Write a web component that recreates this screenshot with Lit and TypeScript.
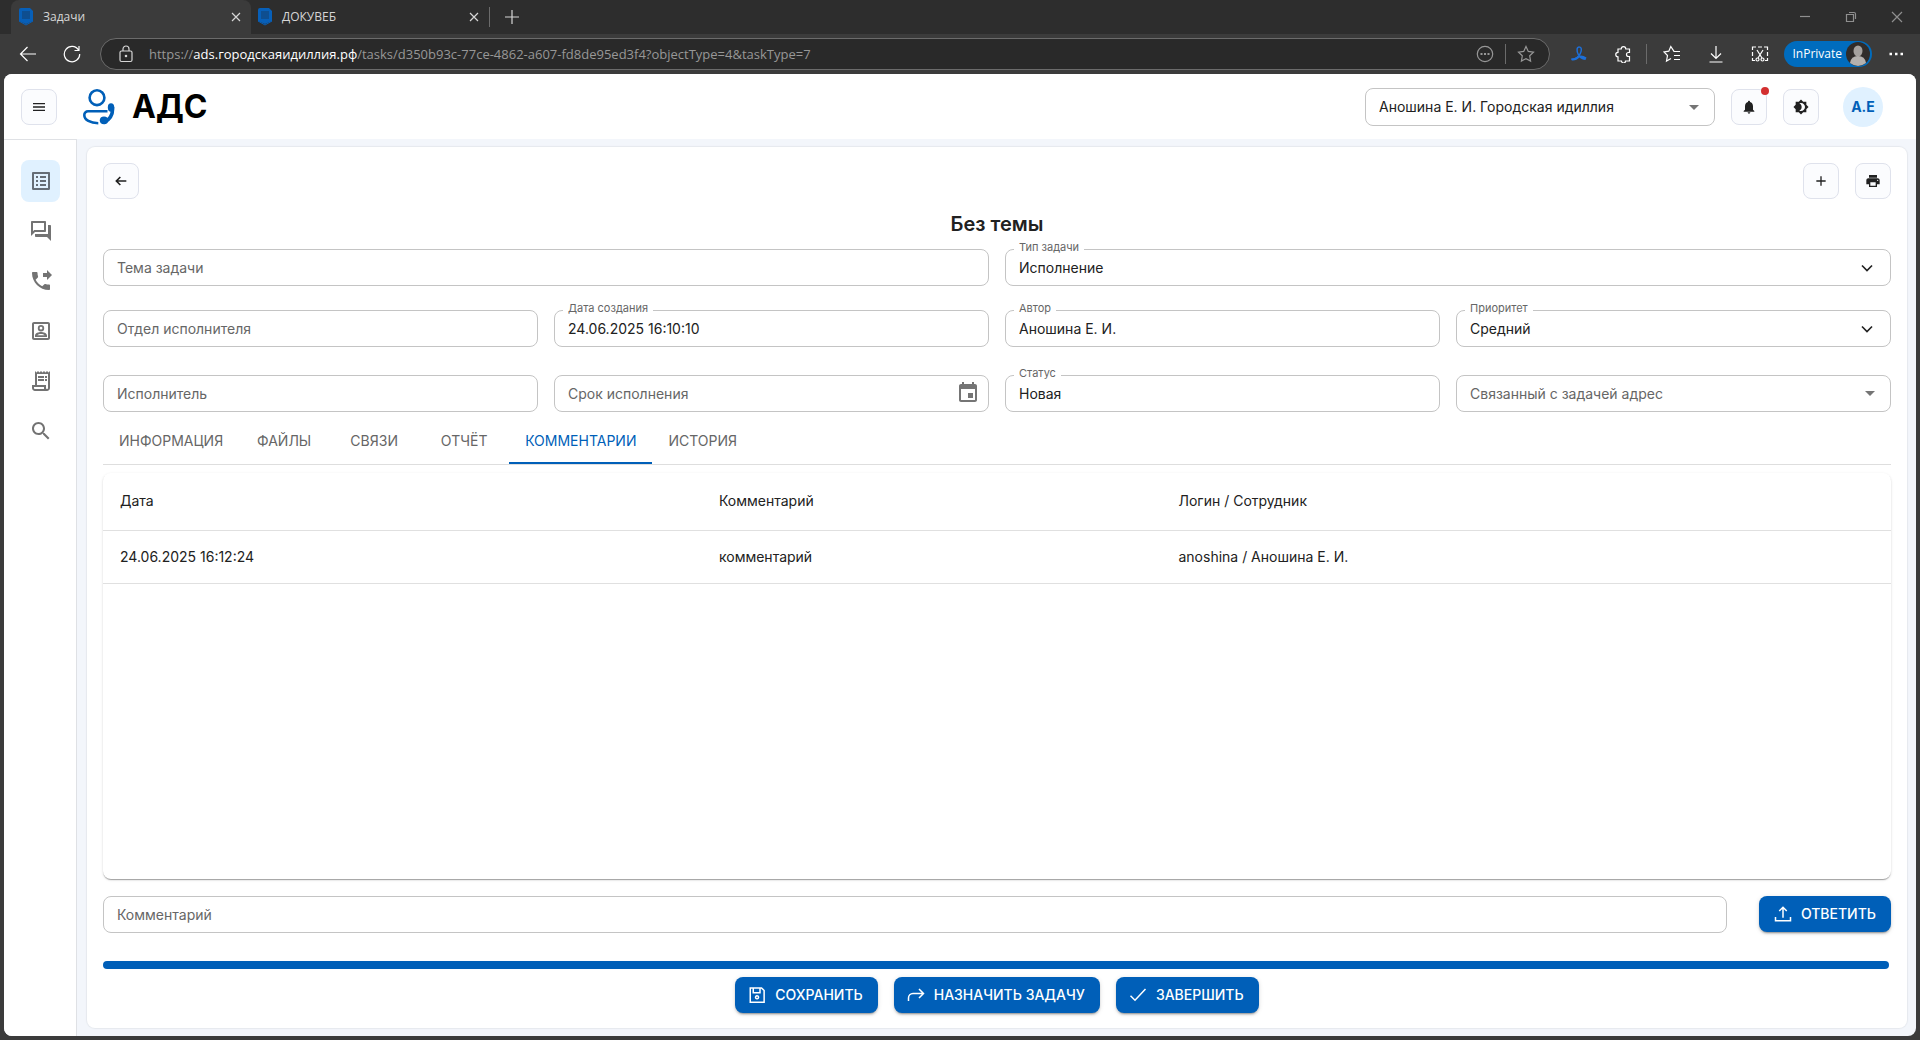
import { LitElement, html, css, svg, nothing } from "lit";
import { customElement } from "lit/decorators.js";

const paths: Record<string, string> = {
  menu: "M3 18h18v-2H3v2zm0-5h18v-2H3v2zm0-7v2h18V6H3z",
  list: "M19 5v14H5V5h14m1.1-2H3.9c-.5 0-.9.4-.9.9v16.2c0 .4.4.9.9.9h16.2c.4 0 .9-.5.9-.9V3.9c0-.5-.5-.9-.9-.9zM11 7h6v2h-6V7zm0 4h6v2h-6v-2zm0 4h6v2h-6zM7 7h2v2H7zm0 4h2v2H7zm0 4h2v2H7z",
  chat: "M15 4v7H5.17L4 12.17V4h11m1-2H3c-.55 0-1 .45-1 1v14l4-4h10c.55 0 1-.45 1-1V3c0-.55-.45-1-1-1zm5 4h-2v9H6v2c0 .55.45 1 1 1h11l4 4V7c0-.55-.45-1-1-1z",
  phone: "M18 11l5-5-5-5v3h-4v4h4v3zm2 4.5c-1.25 0-2.45-.2-3.57-.57-.35-.11-.74-.03-1.02.24l-2.2 2.2c-2.83-1.44-5.15-3.75-6.59-6.59l2.2-2.21c.28-.26.36-.65.25-1C8.7 6.45 8.5 5.25 8.5 4c0-.55-.45-1-1-1H4c-.55 0-1 .45-1 1 0 9.39 7.61 17 17 17 .55 0 1-.45 1-1v-3.5c0-.55-.45-1-1-1z",
  account: "M19 3H5c-1.1 0-2 .9-2 2v14c0 1.1.9 2 2 2h14c1.1 0 2-.9 2-2V5c0-1.1-.9-2-2-2zm0 16H5V5h14v14zM12 6a3.2 3.2 0 1 0 0 6.4A3.2 3.2 0 0 0 12 6zm0 4.6a1.4 1.4 0 1 1 0-2.8 1.4 1.4 0 0 1 0 2.8zM12 13c-2.3 0-6 1.1-6 3.6V18h12v-1.400c0-2.500-3.700-3.600-6-3.600zm-3.700 3.300c.8-.9 2.300-1.400 3.700-1.400s2.900.5 3.700 1.400z",
  receipt: "M19.5 3.5 18 2l-1.500 1.500L15 2l-1.500 1.500L12 2l-1.500 1.500L9 2 7.500 3.500 6 2v14H3v3c0 1.660 1.340 3 3 3h12c1.660 0 3-1.340 3-3V2l-1.500 1.500zM15 20H6c-.55 0-1-.45-1-1v-1h10v2zm4-1c0 .55-.45 1-1 1s-1-.45-1-1v-3H8V5h11v14zM9 7h6v2H9zM16 7h2v2h-2zM9 10h6v2H9zM16 10h2v2h-2z",
  search: "M15.5 14h-.79l-.28-.27C15.41 12.59 16 11.11 16 9.5 16 5.91 13.09 3 9.5 3S3 5.91 3 9.5 5.91 16 9.5 16c1.61 0 3.09-.59 4.23-1.57l.27.28v.79l5 4.99L20.49 19l-4.99-5zm-6 0C7.01 14 5 11.99 5 9.5S7.01 5 9.5 5 14 7.01 14 9.5 11.99 14 9.5 14z",
  event: "M17 12h-5v5h5v-5zM16 1v2H8V1H6v2H5c-1.11 0-1.99.9-1.99 2L3 19c0 1.1.89 2 2 2h14c1.1 0 2-.9 2-2V5c0-1.1-.9-2-2-2h-1V1h-2zm3 18H5V8h14v11z",
  print: "M19 8H5c-1.66 0-3 1.34-3 3v6h4v4h12v-4h4v-6c0-1.66-1.34-3-3-3zm-3 11H8v-5h8v5zm3-7c-.55 0-1-.45-1-1s.45-1 1-1 1 .45 1 1-.45 1-1 1zm-1-9H6v4h12V3z",
  bell: "M12 22c1.1 0 2-.9 2-2h-4c0 1.1.89 2 2 2zm6-6v-5c0-3.07-1.64-5.64-4.5-6.32V4c0-.83-.67-1.5-1.5-1.5s-1.5.67-1.5 1.5v.68C7.63 5.36 6 7.92 6 11v5l-2 2v1h16v-1l-2-2z",
  theme: "M20 8.69V4h-4.690L12 .69 8.690 4H4v4.690L.69 12 4 15.310V20h4.690L12 23.310 15.310 20H20v-4.690L23.310 12 20 8.690zM12 18c-.89 0-1.740-.2-2.500-.55C11.560 16.500 13 14.420 13 12s-1.440-4.500-3.500-5.450C10.260 6.200 11.110 6 12 6c3.310 0 6 2.690 6 6s-2.690 6-6 6z",
  drop: "M7 10l5 5 5-5z",
};

const strokes: Record<string, string> = {
  back: "M20 12H5M11 6l-6 6 6 6",
  plus: "M12 5v14M5 12h14",
  chevron: "M6 9l6 6 6-6",
  save: "M3 2.500h15l3.500 3.500v15.500H3zM7 3v6h9V3M12 13a2 2 0 1 0 .1 0",
  forward: "M2 20v-4a6 6 0 0 1 6-6h14M16 4l6 6-6 6",
  check: "M2 13l6 6L22 4",
  upload: "M12 17V3M7 8l5-5 5 5M2 16v5h20v-5",
};

const fill = (name: string, size = 24) => html`<svg class="ic" width=${size} height=${size} viewBox="0 0 24 24" fill="currentColor" aria-hidden="true"><path d=${paths[name]}></path></svg>`;
const line = (name: string, size = 18, w = 2) => html`<svg class="ic" width=${size} height=${size} viewBox="0 0 24 24" fill="none" stroke="currentColor" stroke-width=${w} aria-hidden="true"><path d=${strokes[name]}></path></svg>`;
const chrome = (body: unknown, size = 18) => html`<svg class="ic" width=${size} height=${size} viewBox="0 0 18 18" fill="none" stroke="currentColor" stroke-width="1.2" aria-hidden="true">${body}</svg>`;

const base = css`
  *, :host { box-sizing: border-box; }
  button, input, select { font: inherit; color: inherit; margin: 0; }
  button { display: inline-flex; align-items: center; justify-content: center; border: 0; background: none; padding: 0; cursor: pointer; }
  .ic { display: block; flex: none; }
`;

@customElement("browser-bar")
class BrowserBar extends LitElement {
  static styles = [base, css`
    :host { display: block; color: #d6d6d6; font: 12px/16px "Open Sans", "Noto Sans", sans-serif; background: #3b3b3b; }
    .strip { display: flex; height: 34px; background: #2d2d2d; padding-left: 11px; align-items: center; }
    .tab { display: flex; align-items: center; gap: 9px; width: 240px; height: 34px; padding: 0 6px 0 7px; border-radius: 8px 8px 0 0; }
    .tab.on { background: #3b3b3b; }
    .tab a { flex: 1; color: inherit; text-decoration: none; }
    .tab.next { width: 238px; padding: 0 6px; }
    .rule { width: 1px; height: 20px; background: #6b6b6b; }
    .add { margin-left: 13px; }
    .controls { display: flex; margin-left: auto; color: #8f8f8f; }
    .controls button { width: 46px; height: 34px; }
    .bar { display: flex; align-items: center; height: 40px; padding: 0 15px 0 19px; }
    .nav { display: flex; gap: 26px; width: 81px; color: #fff; }
    .address { flex: 1; display: flex; align-items: center; gap: 14px; height: 32px; padding: 0 14px 0 16px; border: 1px solid #6b6b6b; border-radius: 16px; background: #292929; font-size: 13px; min-width: 0; }
    .url { flex: 1; color: #979797; white-space: nowrap; overflow: hidden; }
    .url b { color: #fff; font-weight: 400; }
    .dim { color: #979797; display: flex; align-items: center; gap: 11px; }
    .ext { display: flex; align-items: center; gap: 26px; padding-left: 20px; color: #fff; }
    .pair { display: flex; align-items: center; gap: 14px; margin-right: -10px; }
    .private { height: 26px; border-radius: 13px; background: #006cbe; gap: 4px; padding: 0 2px 0 8px; margin: 0 -11px; }
  `];
  render() {
    const favicon = html`<svg class="ic" width="16" height="18" viewBox="0 0 16 18" aria-hidden="true"><path d="M1 2q0-2 2-2h9l3 3v10l-7 3-7-3z" fill="#075fb8"></path><path d="M4 4h8M4 6h8M4 8h8M4 10h8" stroke="#173e69" stroke-width="1"></path><path d="M1 13l7 4 7-4" fill="none" stroke="#075fb8"></path></svg>`;
    const close = chrome(svg`<path d="M5 5l8 8M13 5l-8 8"></path>`);
    return html`
      <div class="strip">
        <div class="tab on">${favicon}<a href="#tasks">Задачи</a><button aria-label="Закрыть вкладку">${close}</button></div>
        <div class="tab next">${favicon}<a href="#docs">ДОКУВЕБ</a><button aria-label="Закрыть вкладку">${close}</button></div>
        <span class="rule"></span>
        <button class="add" aria-label="Новая вкладка">${chrome(svg`<path d="M2 9h14M9 2v14"></path>`)}</button>
        <div class="controls">
          <button aria-label="Свернуть">${chrome(svg`<path d="M4 8.500h10"></path>`)}</button>
          <button aria-label="Восстановить">${chrome(svg`<path d="M4.500 6.500h7v7h-7zM7 4.500h5q1.500 0 1.500 1.500v5"></path>`)}</button>
          <button aria-label="Закрыть">${chrome(svg`<path d="M4 4l10 10M14 4l-10 10"></path>`)}</button>
        </div>
      </div>
      <div class="bar">
        <div class="nav">
          <button aria-label="Назад">${chrome(svg`<path d="M17 9H1.500M8.500 2L1.500 9l7 7"></path>`)}</button>
          <button aria-label="Обновить">${chrome(svg`<path d="M15.500 5A7.700 7.700 0 1 0 16.700 9M16 1v4.500h-4.500"></path>`)}</button>
        </div>
        <div class="address">
          ${chrome(svg`<rect x="3" y="6" width="12" height="10.500" rx="1.500"></rect><path d="M6 6V4a3 3 0 0 1 6 0v2"></path><circle cx="9" cy="11" r=".7" fill="currentColor"></circle>`, 18)}
          <span class="url">https://<b>ads.городскаяидиллия.рф</b>/tasks/d350b93c-77ce-4862-a607-fd8de95ed3f4?objectType=4&amp;taskType=7</span>
          <span class="dim">
            <button aria-label="Дополнительно">${chrome(svg`<circle cx="9" cy="9" r="7.700"></circle><path d="M4.500 9h2M8 9h2M11.500 9h2" stroke-width="1.800"></path>`)}</button>
            <span class="rule"></span>
            <button aria-label="Добавить в избранное">${chrome(svg`<path d="M9 1.500l2.300 4.900 5.200.7-3.800 3.700.9 5.300L9 13.600l-4.600 2.500.9-5.300L1.500 7.100l5.200-.7z"></path>`)}</button>
          </span>
        </div>
        <div class="ext">
          <button aria-label="Расширение">${chrome(svg`<path d="M8.500 10C6 5 7 2 9.300 2s2.700 3 1 6.500C9 11.500 6 14 1.500 14.500" stroke="#1d6fd8" stroke-width="1.500"></path><path d="M1 13.500c3 .3 5-1 7.500-2.500 3-1 5-.3 8 1.500l-1 2.500c-2.500 0-4.500-1-6-2.500C7 14.500 5 16 2 15.500z" fill="#1d6fd8" stroke="none"></path>`)}</button>
          <span class="pair">
            <button aria-label="Расширения">${chrome(svg`<path d="M4 4h3.200a2.300 2.300 0 0 1 4.600 0H15.500v3.500h-1a2 2 0 0 0 0 4h1V16H11.500a2 2 0 0 1-4 0H4v-4.200a2.200 2.200 0 0 1 0-4.500z"></path>`)}</button>
            <span class="rule"></span>
          </span>
          <button aria-label="Избранное">${chrome(svg`<path d="M11 6.300L7.800 1.500 5.800 6.200 1 7l3.500 3.500-1 5.500L8 13.500M10.500 6.500H17M11 10.500h6M11 14.500h6"></path>`)}</button>
          <button aria-label="Загрузки">${chrome(svg`<path d="M9 1v12M4 8.500l5 5 5-5M2.500 17h13"></path>`)}</button>
          <button aria-label="Снимок экрана">${chrome(svg`<path d="M1.500 5V2H5M7 2h4M13 2h3.500v3M1.500 7v4M16.500 7v4M1.500 13v2.500H4M16.500 13v2.500H14M6 5l5 8M12 5l-5 8"></path><circle cx="6.500" cy="14.500" r="1.500"></circle><circle cx="11.500" cy="14.500" r="1.500"></circle>`)}</button>
          <button class="private">InPrivate<svg class="ic" width="24" height="24" viewBox="0 0 24 24" aria-hidden="true"><circle cx="12" cy="12" r="12" fill="#302c2a"></circle><ellipse cx="12" cy="9" rx="4.500" ry="5.500" fill="#a5a19e"></ellipse><path d="M4 21q1-7 8-7t8 7q-8 6-16 0" fill="#b5b1ae"></path></svg></button>
          <button aria-label="Меню">${chrome(svg`<path d="M2.500 9h2.500M8 9h2.500M13.500 9h2.500" stroke-width="2.400"></path>`)}</button>
        </div>
      </div>`;
  }
}

interface Field { id: string; label: string; value?: string; kind?: "select" | "combo" | "date"; wide?: boolean; }

@customElement("form-field")
class FormField extends LitElement {
  static properties = { field: { attribute: false } };
  declare field: Field;
  static styles = [base, css`
    :host { display: block; min-width: 0; }
    .box { position: relative; height: 37px; }
    input, select { display: block; width: 100%; height: 37px; padding: 0 40px 0 13px; border: 1px solid #c4c4c4; border-radius: 8px; background: #fff; color: #212121; appearance: none; outline: none; }
    label { position: absolute; left: 14px; top: 9px; line-height: 20px; color: #666; pointer-events: none; }
    label.float { left: 9px; top: -9px; padding: 0 5px; font-size: 11px; line-height: 14px; background: #fff; }
    .end { position: absolute; right: 9px; top: 6px; color: #757575; pointer-events: none; }
    .end.dark { right: 14px; top: 9px; color: #212121; }
  `];
  render() {
    const f = this.field;
    return html`<div class="box">
      ${f.kind === "select"
        ? html`<select id=${f.id}><option>${f.value}</option></select>`
        : html`<input id=${f.id} type="text" .value=${f.value ?? ""}>`}
      <label for=${f.id} class=${f.value ? "float" : ""}>${f.label}</label>
      ${f.kind === "select" ? html`<span class="end dark">${line("chevron", 20, 2)}</span>` : nothing}
      ${f.kind === "combo" ? html`<span class="end">${fill("drop")}</span>` : nothing}
      ${f.kind === "date" ? html`<button class="end" aria-label="Выбрать дату">${fill("event")}</button>` : nothing}
    </div>`;
  }
}

@customElement("app-root")
class AppRoot extends LitElement {
  static styles = [base, css`
    :host { display: flex; flex-direction: column; min-height: 100vh; padding-bottom: 4px; background: #3b3b3b; color: #212121; font: 14px/20px Inter, "Liberation Sans", sans-serif; }
    .page { flex: 1; display: flex; flex-direction: column; margin: 0 4px; border-radius: 8px; overflow: hidden; background: #f3f6fb; }
    header { display: flex; align-items: center; height: 65px; padding: 0 33px 0 17px; background: #fff; }
    .square { width: 36px; height: 36px; border: 1px solid #dfe2ec; border-radius: 8px; background: #fbfcfe; position: relative; }
    .brand { display: flex; align-items: center; gap: 17px; margin-left: 26px; color: #000; font-size: 32px; line-height: 40px; font-weight: 700; text-decoration: none; }
    .tools { display: flex; align-items: center; gap: 16px; margin-left: auto; }
    .org { position: relative; width: 350px; }
    .org select { display: block; width: 100%; height: 38px; padding: 0 36px 0 13px; border: 1px solid #c4c4c4; border-radius: 8px; background: #fff; appearance: none; }
    .org .ic { position: absolute; right: 9px; top: 7px; color: #757575; pointer-events: none; }
    .dot { position: absolute; right: -3px; top: -3px; width: 8px; height: 8px; border-radius: 50%; background: #d32f2f; }
    .avatar { width: 40px; height: 40px; margin-left: 8px; border-radius: 50%; background: #e0f1ff; color: #005fb8; font-weight: 700; }
    .body { flex: 1; display: flex; }
    nav { display: flex; flex-direction: column; gap: 8px; width: 73px; padding: 20px 16px 0 17px; background: #fff; border: solid #dfe1e5; border-width: 1px 1px 0 0; }
    nav a { display: flex; align-items: center; justify-content: center; height: 42px; border-radius: 8px; color: #737373; }
    nav a.on { background: #e0f1ff; color: #656d76; }
    main { flex: 1; display: flex; flex-direction: column; min-width: 0; margin: 8px 9px 8px 10px; padding: 16px 16px 15px; border-radius: 8px; background: #fff; box-shadow: 0 0 1px 1px #e6e9ee; }
    .acts { display: flex; gap: 16px; }
    .acts .first { margin-right: auto; }
    h1 { margin: 12px 0; text-align: center; font-size: 20px; line-height: 26px; font-weight: 600; }
    .grid { display: grid; grid-template-columns: repeat(4, 1fr); gap: 24px 16px; }
    .wide { grid-column: span 2; }
    .last { margin-top: 4px; }
    .tabs { display: flex; height: 47px; margin-top: 6px; border-bottom: 1px solid #dedede; }
    .tabs button { min-width: 90px; padding: 0 16px; color: #666; }
    .tabs button.on { color: #005fb8; box-shadow: inset 0 -2px #005fb8; }
    .paper { flex: 1; margin-top: 8px; border-radius: 8px; box-shadow: 0 2px 1px -1px #0003, 0 1px 1px 0 #00000024, 0 1px 3px 0 #0000001f; }
    table { width: 100%; table-layout: fixed; border-collapse: collapse; text-align: left; }
    th { height: 57px; font-weight: 400; }
    td { height: 53px; }
    th, td { padding: 0 17px; border-bottom: 1px solid #e0e0e0; }
    .c1 { width: 33.5%; }
    .c2 { width: 25.7%; }
    .reply { display: flex; gap: 32px; margin-top: 17px; }
    .reply form-field { flex: 1; }
    .primary { height: 36px; padding: 0 15px 0 13px; gap: 9px; border-radius: 8px; background: #005fb8; color: #fff; font-weight: 500; box-shadow: 0 3px 1px -2px #0003, 0 2px 2px 0 #00000024, 0 1px 5px 0 #0000001f; }
    .reply .primary { padding: 0 15px; }
    .bar { height: 8px; margin: 28px 2px 8px 0; border-radius: 4px; background: #005fb8; }
    .foot { display: flex; justify-content: center; gap: 16px; }
  `];
  render() {
    const fields: Field[] = [
      { id: "topic", label: "Тема задачи", wide: true },
      { id: "type", label: "Тип задачи", value: "Исполнение", kind: "select", wide: true },
      { id: "dept", label: "Отдел исполнителя" },
      { id: "created", label: "Дата создания", value: "24.06.2025 16:10:10" },
      { id: "author", label: "Автор", value: "Аношина Е. И." },
      { id: "priority", label: "Приоритет", value: "Средний", kind: "select" },
      { id: "assignee", label: "Исполнитель" },
      { id: "due", label: "Срок исполнения", kind: "date" },
      { id: "status", label: "Статус", value: "Новая" },
      { id: "address", label: "Связанный с задачей адрес", kind: "combo" },
    ];
    const menu = [["list", "Задачи"], ["chat", "Обращения"], ["phone", "Звонки"], ["account", "Контакты"], ["receipt", "Счета"], ["search", "Поиск"]];
    const tabs = ["ИНФОРМАЦИЯ", "ФАЙЛЫ", "СВЯЗИ", "ОТЧЁТ", "КОММЕНТАРИИ", "ИСТОРИЯ"];
    return html`
      <browser-bar></browser-bar>
      <div class="page">
        <header>
          <button class="square" aria-label="Меню">${fill("menu", 16)}</button>
          <a class="brand" href="#home">
            <svg class="ic" width="32" height="36" viewBox="0 0 32 36" fill="none" stroke="#005fb8" stroke-width="2.600" aria-hidden="true">
              <circle cx="14" cy="8.700" r="7.400"></circle>
              <path d="M24.500 22.300H5a3.700 3.700 0 0 0-3.700 3.700c0 5 6 8.200 14 8.200"></path>
              <path d="M29.500 18Q30.500 29 21 33.500" stroke-width="3.600"></path>
              <ellipse cx="28" cy="18.500" rx="3.200" ry="4.200" fill="#005fb8" stroke="none"></ellipse>
              <ellipse cx="21" cy="31.300" rx="4.200" ry="3.900" fill="#005fb8" stroke="none"></ellipse>
            </svg>АДС</a>
          <div class="tools">
            <div class="org"><select aria-label="Сотрудник и организация"><option>Аношина Е. И. Городская идиллия</option></select>${fill("drop")}</div>
            <button class="square" aria-label="Уведомления">${fill("bell", 16)}<span class="dot"></span></button>
            <button class="square" aria-label="Тема оформления">${fill("theme", 16)}</button>
            <button class="avatar">A.E</button>
          </div>
        </header>
        <div class="body">
          <nav>${menu.map(([icon, name], i) => html`<a href="#${icon}" class=${i === 0 ? "on" : ""} aria-label=${name}>${fill(icon)}</a>`)}</nav>
          <main>
            <div class="acts">
              <button class="square first" aria-label="Назад">${line("back", 16, 2.4)}</button>
              <button class="square" aria-label="Добавить">${line("plus", 16)}</button>
              <button class="square" aria-label="Печать">${fill("print", 16)}</button>
            </div>
            <h1>Без темы</h1>
            <div class="grid">${fields.map((f, i) => html`<form-field class=${f.wide ? "wide" : i > 5 ? "last" : ""} .field=${f}></form-field>`)}</div>
            <div class="tabs" role="tablist">${tabs.map((t, i) => html`<button role="tab" aria-selected=${i === 4} class=${i === 4 ? "on" : ""}>${t}</button>`)}</div>
            <div class="paper">
              <table>
                <thead><tr><th class="c1">Дата</th><th class="c2">Комментарий</th><th>Логин / Сотрудник</th></tr></thead>
                <tbody><tr><td>24.06.2025 16:12:24</td><td>комментарий</td><td>anoshina / Аношина Е. И.</td></tr></tbody>
              </table>
            </div>
            <div class="reply">
              <form-field .field=${{ id: "comment", label: "Комментарий" }}></form-field>
              <button class="primary">${line("upload", 18)}ОТВЕТИТЬ</button>
            </div>
            <div class="bar"></div>
            <div class="foot">
              <button class="primary">${line("save")}СОХРАНИТЬ</button>
              <button class="primary">${line("forward")}НАЗНАЧИТЬ ЗАДАЧУ</button>
              <button class="primary">${line("check")}ЗАВЕРШИТЬ</button>
            </div>
          </main>
        </div>
      </div>`;
  }
}
